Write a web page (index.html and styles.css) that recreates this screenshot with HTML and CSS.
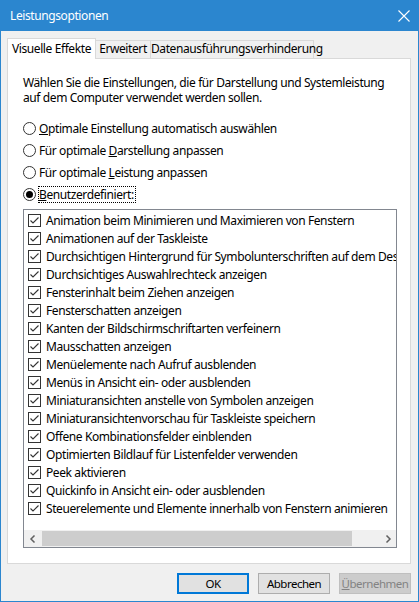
FILE: index.html
```html
<!DOCTYPE html>
<html lang="de">
<head>
<meta charset="utf-8">
<title>Leistungsoptionen</title>
<link rel="stylesheet" href="styles.css">
</head>
<body>
<div class="window">
  <div class="titlebar">
    <span class="title">Leistungsoptionen</span>
    <svg class="close" width="12" height="12" viewBox="0 0 12 12"><path d="M0.5 0.5 L11.5 11.5 M11.5 0.5 L0.5 11.5" stroke="#fff" stroke-width="1.1" fill="none"/></svg>
  </div>
  <div class="content">
    <div class="tabs">
      <div class="tab active">Visuelle Effekte</div>
      <div class="tab t2">Erweitert</div>
      <div class="tab t3">Datenausführungsverhinderung</div>
    </div>
    <div class="panel">
      <p class="intro">Wählen Sie die Einstellungen, die für Darstellung und Systemleistung auf dem Computer verwendet werden sollen.</p>
      <div class="radios">
        <div class="radio"><span class="rb"></span><span><u>O</u>ptimale Einstellung automatisch auswählen</span></div>
        <div class="radio"><span class="rb"></span><span>Für optimale <u>D</u>arstellung anpassen</span></div>
        <div class="radio"><span class="rb"></span><span>Für optimale <u>L</u>eistung anpassen</span></div>
        <div class="radio"><span class="rb on"></span><span class="focus"><u>B</u>enutzerdefiniert:</span></div>
      </div>
      <div class="listbox">
        <div class="items">
          <div class="item"><span class="cb"></span>Animation beim Minimieren und Maximieren von Fenstern</div>
          <div class="item"><span class="cb"></span>Animationen auf der Taskleiste</div>
          <div class="item"><span class="cb"></span>Durchsichtigen Hintergrund für Symbolunterschriften auf dem Desktop verwenden</div>
          <div class="item"><span class="cb"></span>Durchsichtiges Auswahlrechteck anzeigen</div>
          <div class="item"><span class="cb"></span>Fensterinhalt beim Ziehen anzeigen</div>
          <div class="item"><span class="cb"></span>Fensterschatten anzeigen</div>
          <div class="item"><span class="cb"></span>Kanten der Bildschirmschriftarten verfeinern</div>
          <div class="item"><span class="cb"></span>Mausschatten anzeigen</div>
          <div class="item"><span class="cb"></span>Menüelemente nach Aufruf ausblenden</div>
          <div class="item"><span class="cb"></span>Menüs in Ansicht ein- oder ausblenden</div>
          <div class="item"><span class="cb"></span>Miniaturansichten anstelle von Symbolen anzeigen</div>
          <div class="item"><span class="cb"></span>Miniaturansichtenvorschau für Taskleiste speichern</div>
          <div class="item"><span class="cb"></span>Offene Kombinationsfelder einblenden</div>
          <div class="item"><span class="cb"></span>Optimierten Bildlauf für Listenfelder verwenden</div>
          <div class="item"><span class="cb"></span>Peek aktivieren</div>
          <div class="item"><span class="cb"></span>Quickinfo in Ansicht ein- oder ausblenden</div>
          <div class="item"><span class="cb"></span>Steuerelemente und Elemente innerhalb von Fenstern animieren</div>
        </div>
        <div class="hscroll">
          <span class="arrow"><svg width="8" height="8" viewBox="0 0 8 8"><path d="M5.5 0.5 L2 4 L5.5 7.5" stroke="#606060" stroke-width="1.5" fill="none"/></svg></span>
          <div class="track"><div class="thumb"></div></div>
          <span class="arrow"><svg width="8" height="8" viewBox="0 0 8 8"><path d="M2.5 0.5 L6 4 L2.5 7.5" stroke="#606060" stroke-width="1.5" fill="none"/></svg></span>
        </div>
      </div>
    </div>
    <div class="buttons">
      <button class="btn default">OK</button>
      <button class="btn">Abbrechen</button>
      <button class="btn disabled"><u>Ü</u>bernehmen</button>
    </div>
  </div>
</div>
</body>
</html>
```
FILE: styles.css
```css
* { box-sizing: border-box; }
html, body { margin: 0; padding: 0; background: #f0f0f0; }
body { font-family: "Noto Sans", "Open Sans", sans-serif; font-size: 12px; letter-spacing: -0.4px; color: #000; }
.window {
  width: 419px; height: 602px;
  border: 1px solid #2b86cf;
  background: #f0f0f0;
  display: flex; flex-direction: column;
}
.titlebar {
  height: 30px; flex: none;
  background: #2b86cf; color: #fff;
  display: flex; align-items: center; justify-content: space-between;
  padding: 0 9px 0 9px;
}
.title { font-size: 12px; line-height: 16px; }
.close { margin-right: -1px; }
.content { padding: 7px 7px 0 6px; display: flex; flex-direction: column; }
.tabs { display: flex; align-items: flex-end; height: 20px; position: relative; z-index: 1; }
.tab {
  height: 18px; line-height: 15px;
  border: 1px solid #d9d9d9; border-bottom: none;
  background: #f0f0f0;
  text-align: center;
  white-space: nowrap;
  margin-left: -1px;
}
.tab.t2 { width: 55px; margin-left: 0; border-left: none; }
.tab.t3 { width: 164px; }
.tab.active {
  width: 89px;
  height: 21px; background: #fff; margin-left: 0; margin-bottom: -1px;
  padding-top: 1px; line-height: 18px;
}
.panel {
  height: 506px;
  background: #fff;
  border: 1px solid #d9d9d9;
  padding: 16px 13px 0 15px;
  display: flex; flex-direction: column;
}
.intro { margin: 0; line-height: 15px; width: 372px; }
.radios { margin-top: 12px; display: flex; flex-direction: column; }
.radio { height: 22px; display: flex; align-items: center; gap: 3px; }
.rb {
  width: 13px; height: 13px; border: 1px solid #333; border-radius: 50%;
  background: #fff; display: inline-flex; align-items: center; justify-content: center; flex: none;
}
.rb.on::after { content: ""; width: 7px; height: 7px; border-radius: 50%; background: #000; }
.focus { outline: 1px dotted #000; outline-offset: 0; padding: 0 1px 0 0; line-height: 15px; }
.listbox {
  margin-top: 4px;
  width: 374px; height: 339px;
  border: 1px solid #828790;
  background: #fff;
  display: flex; flex-direction: column;
}
.items { flex: 1; padding: 1px 0 0 4px; overflow: hidden; }
.item { height: 18px; display: flex; align-items: center; white-space: nowrap; }
.cb {
  flex: none; width: 13px; height: 13px; border: 1px solid #333; margin-right: 5px;
  background: #fff url("data:image/svg+xml,%3Csvg xmlns='http://www.w3.org/2000/svg' width='11' height='11' viewBox='0 0 11 11'%3E%3Cpath d='M1.5 5.5 L4 8 L9.5 2.5' stroke='%23333' stroke-width='1.1' fill='none'/%3E%3C/svg%3E") no-repeat center;
}
.hscroll { height: 17px; flex: none; display: flex; align-items: center; background: #f0f0f0; }
.arrow { width: 17px; height: 17px; display: flex; align-items: center; justify-content: center; flex: none; }
.track { flex: 1; height: 17px; display: flex; }
.thumb { width: 310px; height: 15px; margin: 1px 0 0 1px; background: #cdcdcd; }
.buttons { display: flex; justify-content: flex-end; gap: 9px; margin-top: 9px; }
.btn {
  font-family: inherit; font-size: 11.5px; letter-spacing: -0.5px; color: #000;
  width: 72px; height: 21px; padding: 0; margin: 0; white-space: nowrap; overflow: hidden;
  background: #e1e1e1; border: 1px solid #adadad; border-radius: 0;
}
.btn.default { border: 2px solid #0078d7; }
.btn.disabled { background: #cccccc; border-color: #bfbfbf; color: #838383; }
```
